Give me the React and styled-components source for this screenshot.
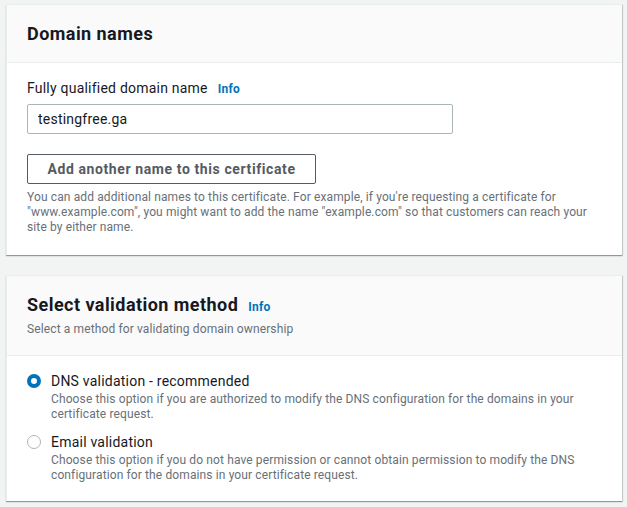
import React from "react";
import styled, { createGlobalStyle } from "styled-components";

const Global = createGlobalStyle`
  html, body { margin: 0; padding: 0; background: #f2f3f3; }
  body { font-family: Roboto, "Liberation Sans", Arial, sans-serif; color: #16191f; -webkit-font-smoothing: antialiased; }
  * { box-sizing: border-box; }
`;

const Page = styled.div`
  display: flex;
  flex-direction: column;
  gap: 20px;
  padding: 4px 5px 7px 6px;
`;

const Card = styled.section`
  background: #fff;
  border-top: 1px solid #eaeded;
  border-left: 1px solid #eaeded;
  box-shadow: 0 1px 1px 0 rgba(0, 28, 36, 0.3), 1px 1px 1px 0 rgba(0, 28, 36, 0.15);
`;

const Header = styled.header`
  background: #fafafa;
  border-bottom: 1px solid #eaeded;
  padding: ${(p) => p.$pad};
`;

const TitleRow = styled.div`
  display: flex;
  align-items: baseline;
  gap: 10px;
`;

const Title = styled.h2`
  margin: 0;
  font-size: 18px;
  line-height: 22px;
  font-weight: 700;
  letter-spacing: 0.45px;
  color: #16191f;
`;

const InfoLink = styled.a`
  font-size: 12px;
  font-weight: 700;
  letter-spacing: 0.2px;
  color: #0073bb;
  text-decoration: none;
`;

const Subtitle = styled.p`
  margin: 5px 0 0;
  font-size: 12px;
  line-height: 16px;
  letter-spacing: 0.12px;
  color: #687078;
`;

const Body = styled.div`
  padding: ${(p) => p.$pad};
  display: flex;
  flex-direction: column;
`;

const LabelRow = styled.div`
  display: flex;
  align-items: baseline;
  gap: 10px;
  font-size: 14px;
  line-height: 20px;
  letter-spacing: 0.22px;
  color: #16191f;
`;

const Input = styled.input`
  margin-top: 5px;
  width: 426px;
  height: 30px;
  border: 1px solid #aab7b8;
  border-radius: 2px;
  padding: 0 10px;
  font-family: inherit;
  font-size: 14px;
  letter-spacing: 0.22px;
  color: #16191f;
  background: #fff;
  outline: none;
`;

const Button = styled.button`
  margin-top: 20px;
  align-self: flex-start;
  width: 289px;
  height: 30px;
  border: 1px solid #545b64;
  border-radius: 2px;
  background: #fff;
  font-family: inherit;
  font-size: 14px;
  font-weight: 700;
  color: #545b64;
  letter-spacing: 0.6px;
  padding: 0;
`;

const Help = styled.p`
  margin: 6px 0 0;
  font-size: 12px;
  line-height: 15px;
  letter-spacing: 0.12px;
  color: #687078;
  max-width: ${(p) => p.$max || "none"};
`;

const Options = styled.div`
  display: flex;
  flex-direction: column;
  gap: 10px;
`;

const Option = styled.label`
  display: grid;
  grid-template-columns: 14px 1fr;
  column-gap: 10px;
  align-items: start;
`;

const Dot = styled.span`
  width: 14px;
  height: 14px;
  margin-top: 3px;
  border-radius: 50%;
  background: #fff;
  border: ${(p) => (p.$checked ? "4px solid #0073bb" : "1px solid #aab7b8")};
`;

const OptText = styled.div`
  display: flex;
  flex-direction: column;
`;

const OptLabel = styled.span`
  font-size: 14px;
  line-height: 20px;
  letter-spacing: 0.22px;
  margin-bottom: 1px;
  color: #16191f;
`;

const OptDesc = styled.span`
  font-size: 12px;
  line-height: 15px;
  letter-spacing: 0.12px;
  color: #687078;
  max-width: 570px;
`;

export default function App() {
  return (
    <>
      <Global />
      <Page>
        <Card>
          <Header $pad="18px 20px 17px">
            <Title>Domain names</Title>
          </Header>
          <Body $pad="15px 20px 20px">
            <LabelRow>
              <span>Fully qualified domain name</span>
              <InfoLink href="#">Info</InfoLink>
            </LabelRow>
            <Input defaultValue="testingfree.ga" />
            <Button type="button">Add another name to this certificate</Button>
            <Help $max="575px">
              You can add additional names to this certificate. For example, if you're requesting a certificate for
              "www.example.com", you might want to add the name "example.com" so that customers can reach your
              site by either name.
            </Help>
          </Body>
        </Card>
        <Card>
          <Header $pad="18px 20px 18px">
            <TitleRow>
              <Title>Select validation method</Title>
              <InfoLink href="#">Info</InfoLink>
            </TitleRow>
            <Subtitle>Select a method for validating domain ownership</Subtitle>
          </Header>
          <Body $pad="15px 20px 18px">
            <Options>
              <Option>
                <Dot $checked />
                <OptText>
                  <OptLabel>DNS validation - recommended</OptLabel>
                  <OptDesc>
                    Choose this option if you are authorized to modify the DNS configuration for the domains in your
                    certificate request.
                  </OptDesc>
                </OptText>
              </Option>
              <Option>
                <Dot />
                <OptText>
                  <OptLabel>Email validation</OptLabel>
                  <OptDesc>
                    Choose this option if you do not have permission or cannot obtain permission to modify the DNS
                    configuration for the domains in your certificate request.
                  </OptDesc>
                </OptText>
              </Option>
            </Options>
          </Body>
        </Card>
      </Page>
    </>
  );
}
